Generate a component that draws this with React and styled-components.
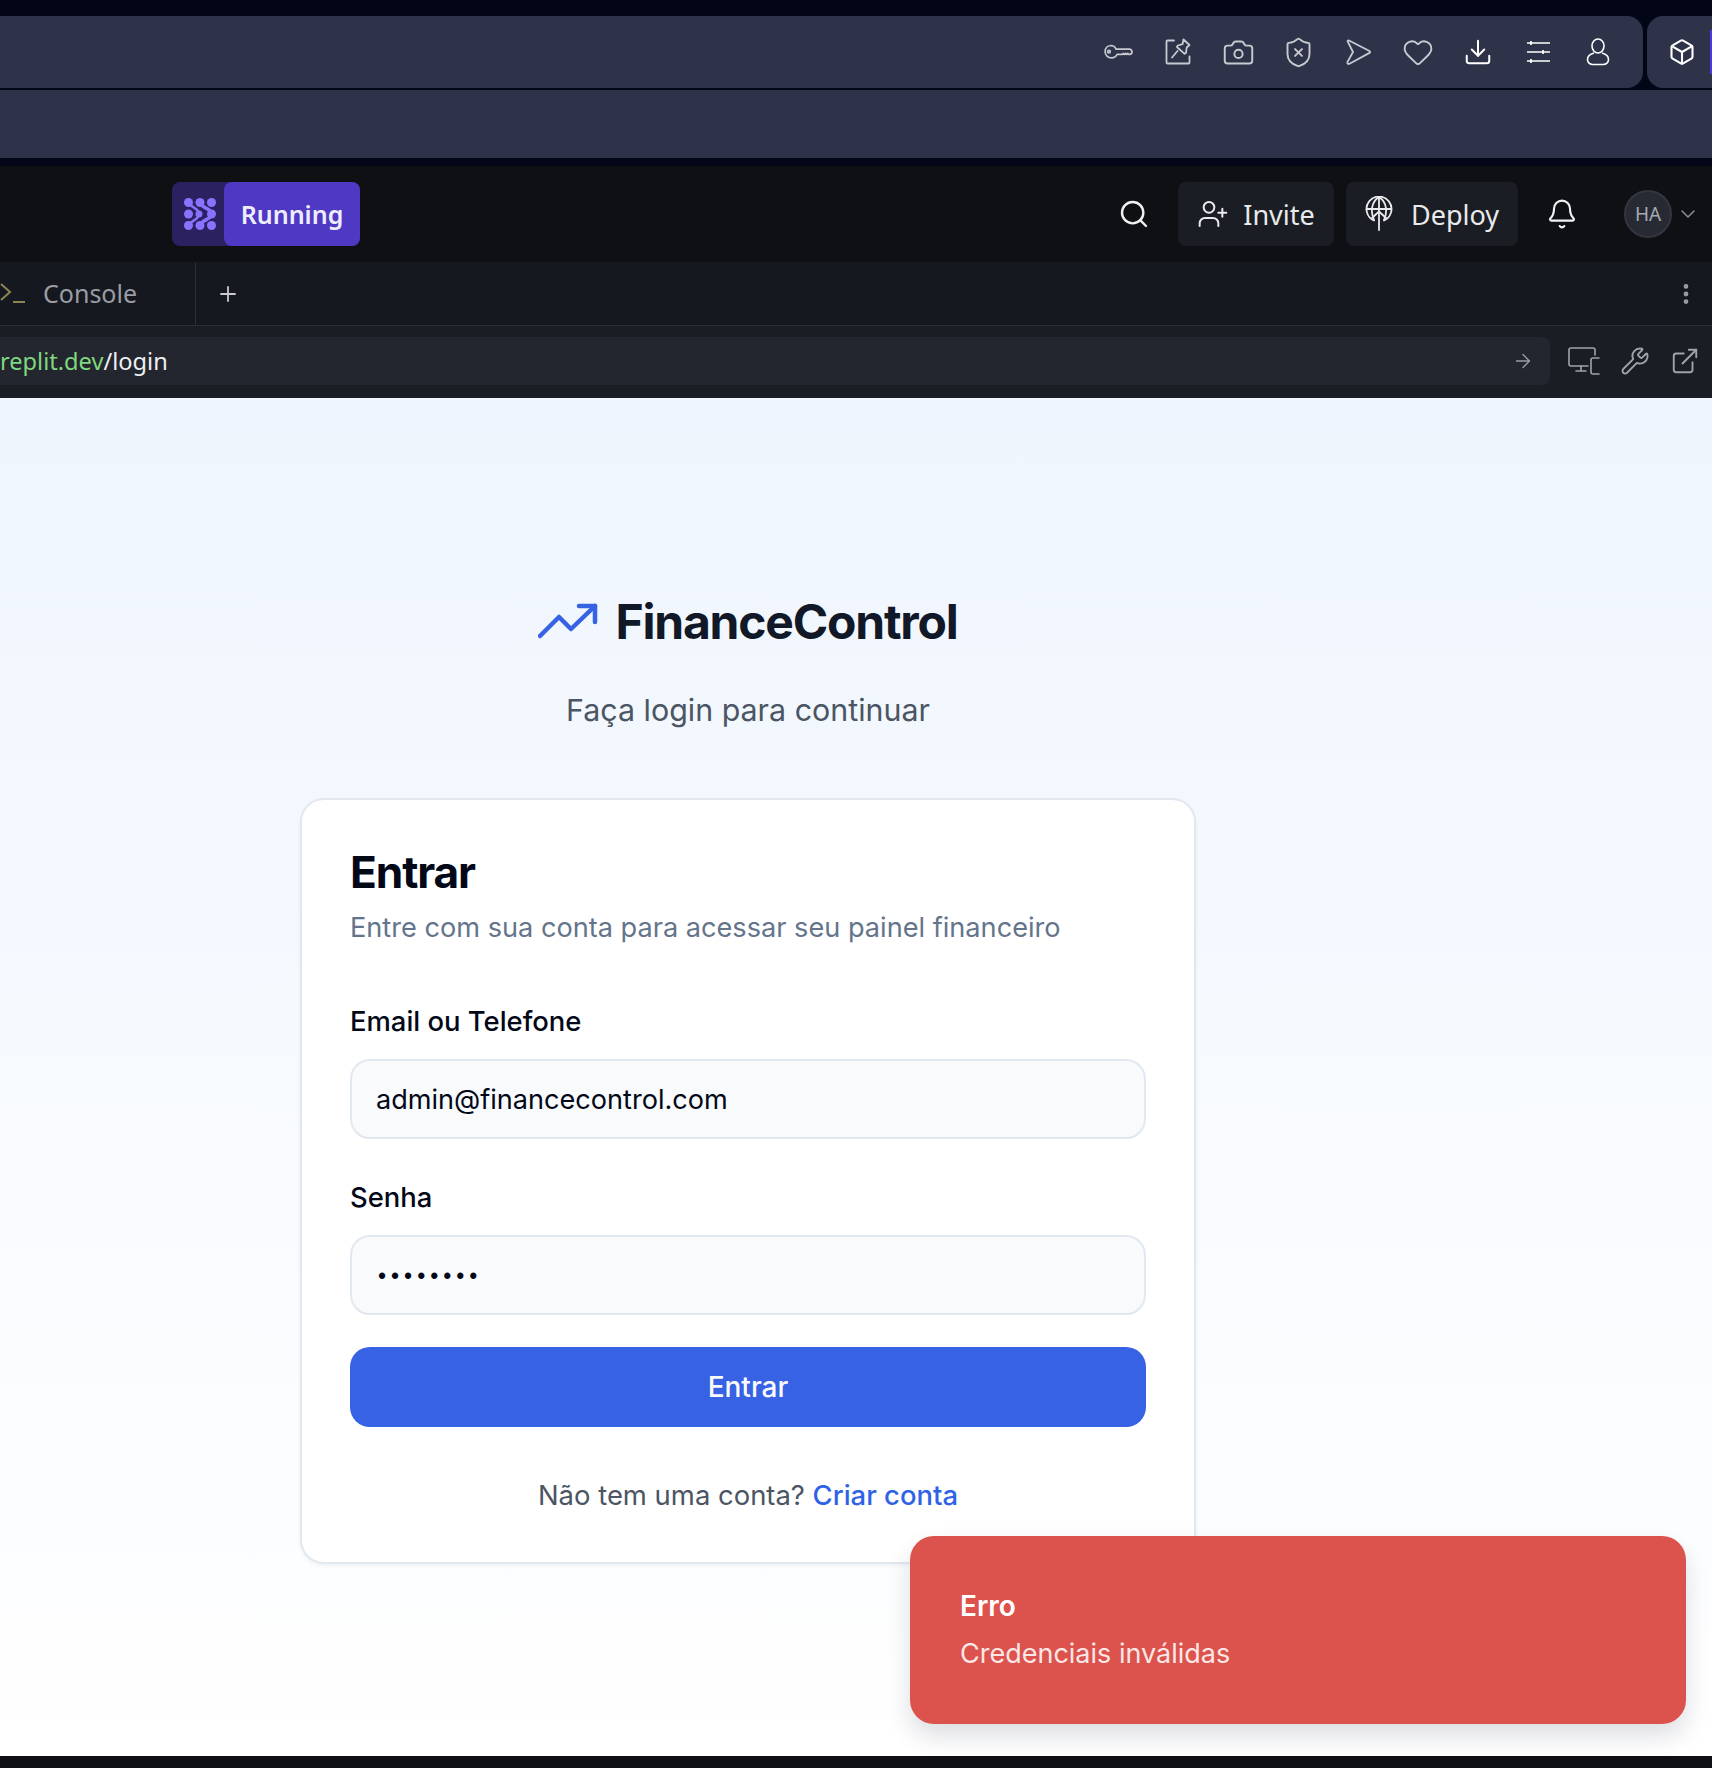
import React from "react";
import styled, { createGlobalStyle } from "styled-components";
import {
	ArrowRight,
	Bell,
	Box,
	Camera,
	ChevronDown,
	Download,
	EllipsisVertical,
	ExternalLink,
	Heart,
	Plus,
	Search,
	ShieldX,
	UserPlus,
	Wrench,
} from "lucide-react";

const GlobalStyle = createGlobalStyle`
	html, body {
		margin: 0;
		padding: 0;
		background: #020617;
	}
	body {
		height: 1768px;
		overflow: hidden;
		font-family: "Inter", "Liberation Sans", sans-serif;
	}
	* {
		box-sizing: border-box;
	}
`;

const Screen = styled.div`
	width: 1712px;
	height: 1768px;
	display: flex;
	flex-direction: column;
	background: #020617;
	padding-top: 16px;
	overflow: hidden;
`;

/* browser chrome at the top */
const ToolRow = styled.div`
	height: 72px;
	display: flex;
	gap: 4px;
`;

const ToolPanel = styled.div`
	flex: 1;
	display: flex;
	align-items: center;
	justify-content: flex-end;
	gap: 32px;
	padding-right: 31px;
	background: #2e3349;
	border-radius: 0 16px 16px 0;
`;

const SidePanel = styled.div`
	width: 65px;
	display: flex;
	align-items: center;
	padding-left: 21px;
	background: #2e3349;
	border-radius: 16px 0 0 16px;
	position: relative;
	color: #fff;

	&::after {
		content: "";
		position: absolute;
		right: 0;
		top: 14px;
		width: 2px;
		height: 44px;
		background: #4f35e8;
	}
`;

const ToolIcon = styled.span`
	width: 28px;
	height: 28px;
	display: flex;
	align-items: center;
	justify-content: center;
	flex: none;
	color: ${(p) => (p.$bright ? "#ffffff" : "#c8cad0")};

	& svg {
		flex: none;
	}
`;

const BlankBar = styled.div`
	height: 68px;
	margin-top: 2px;
	background: #2e3349;
`;

/* replit header */
const Header = styled.div`
	height: 96px;
	margin-top: 8px;
	display: flex;
	align-items: center;
	padding: 0 12px 0 172px;
	background: #0e1014;
`;

const RunGroup = styled.div`
	display: flex;
	height: 64px;
	border-radius: 8px;
	background: #2b2060;
`;

const RunIcon = styled.div`
	width: 52px;
	padding-left: 4px;
	display: flex;
	align-items: center;
	justify-content: center;
`;

const RunButton = styled.div`
	width: 136px;
	display: flex;
	align-items: center;
	justify-content: center;
	border-radius: 8px;
	background: #4e38c4;
	color: #eeeefb;
	font-family: "Noto Sans", sans-serif;
	font-size: 25px;
	font-weight: 600;
`;

const HeaderRight = styled.div`
	margin-left: auto;
	display: flex;
	align-items: center;
`;

const SearchIcon = styled(Search)`
	color: #f0f1f3;
	margin-right: 28px;
`;

const HeaderButton = styled.div`
	height: 64px;
	width: ${(p) => p.$width}px;
	margin-right: 12px;
	display: flex;
	align-items: center;
	justify-content: center;
	gap: ${(p) => p.$gap}px;
	border-radius: 8px;
	background: #1a1d23;
	color: #e9eaec;
	font-family: "Noto Sans", sans-serif;
	font-size: 27px;
`;

const BellIcon = styled(Bell)`
	color: #f0f1f3;
	margin: 0 46px 0 16px;
`;

const Avatar = styled.div`
	width: 48px;
	height: 48px;
	display: flex;
	align-items: center;
	justify-content: center;
	border-radius: 50%;
	background: #272a33;
	border: 2px solid #33363f;
	color: #a6a9b2;
	font-family: "Noto Sans", sans-serif;
	font-size: 19px;
`;

const Caret = styled(ChevronDown)`
	color: #8b8e96;
	margin-left: 4px;
`;

/* tab strip */
const TabBar = styled.div`
	height: 64px;
	display: flex;
	align-items: stretch;
	background: #16181f;
	border-bottom: 1px solid #2b2e35;
	padding-right: 13px;
`;

const ConsoleTab = styled.div`
	width: 196px;
	display: flex;
	align-items: center;
	gap: 17px;
	padding-bottom: 2px;
	border-right: 1px solid #2b2e35;
	color: #9a9da5;
	font-family: "Noto Sans", sans-serif;
	font-size: 25px;
`;

const AddTab = styled.div`
	display: flex;
	align-items: center;
	padding-left: 20px;
	color: #c9cbd0;
`;

const TabMenu = styled.div`
	margin-left: auto;
	display: flex;
	align-items: center;
	color: #9a9da5;
`;

/* address bar */
const UrlRow = styled.div`
	height: 72px;
	display: flex;
	align-items: center;
	background: #1a1d23;
	padding: 0 12px 2px 0;
`;

const UrlField = styled.div`
	width: 1550px;
	height: 48px;
	display: flex;
	align-items: center;
	justify-content: space-between;
	padding-right: 16px;
	border-radius: 0 8px 8px 0;
	background: #23262e;
	color: #eeeff1;
	font-family: "Noto Sans", sans-serif;
	font-size: 23.6px;
`;

const UrlHost = styled.span`
	color: #7fd77f;
`;

const UrlTools = styled.div`
	flex: 1;
	display: flex;
	justify-content: flex-end;
	align-items: center;
	gap: 20px;
	color: #a0a3ab;
`;

/* login page */
const Page = styled.div`
	flex: 1;
	position: relative;
	padding: 193px 0 0 300px;
	background: linear-gradient(180deg, #eff5fe 0%, #ffffff 100%);
`;

const Column = styled.div`
	width: 896px;
	display: flex;
	flex-direction: column;
	align-items: center;
`;

const Brand = styled.div`
	height: 60px;
	display: flex;
	align-items: center;
	gap: 17px;
	margin-bottom: 37px;
`;

const BrandName = styled.h1`
	margin: 0;
	font-size: 48px;
	font-weight: 700;
	letter-spacing: -1.2px;
	color: #111827;
`;

const Tagline = styled.p`
	margin: 0 0 66px;
	font-size: 30.4px;
	line-height: 44px;
	color: #4b5563;
`;

const Card = styled.form`
	width: 100%;
	height: 766px;
	padding: 48px;
	background: #ffffff;
	border: 2px solid #e2e8f0;
	border-radius: 24px;
	box-shadow: 0 2px 4px rgba(15, 23, 42, 0.05);
`;

const CardTitle = styled.h2`
	margin: 0;
	font-size: 44.2px;
	line-height: 48px;
	font-weight: 700;
	letter-spacing: -1.1px;
	color: #020817;
`;

const CardSubtitle = styled.p`
	margin: 12px 0 0;
	font-size: 27.15px;
	line-height: 40px;
	color: #64748b;
`;

const FieldLabel = styled.label`
	display: block;
	margin: ${(p) => p.$top}px 0 20px;
	font-size: 27.4px;
	line-height: 36px;
	font-weight: 500;
	color: #020817;
`;

const TextInput = styled.input`
	display: block;
	width: 100%;
	height: 80px;
	padding: ${(p) => (p.$secret ? "3px 24px 0 26px" : "0 24px")};
	background: #f8fafc;
	border: 2px solid #e2e8f0;
	border-radius: 20px;
	font-family: ${(p) => (p.$secret ? '"Liberation Sans", sans-serif' : "inherit")};
	font-size: ${(p) => (p.$secret ? "23px" : "27.1px")};
	letter-spacing: ${(p) => (p.$secret ? "5px" : "normal")};
	color: #020817;
	outline: none;
`;

const Submit = styled.button`
	display: block;
	width: 100%;
	height: 80px;
	margin-top: 32px;
	border: none;
	border-radius: 20px;
	background: #3662e3;
	color: #f8fafc;
	font-family: inherit;
	font-size: 28px;
	font-weight: 500;
`;

const SignupLine = styled.p`
	margin: 48px 0 0;
	text-align: center;
	font-size: 27.45px;
	line-height: 40px;
	color: #4b5563;
`;

const SignupLink = styled.a`
	color: #2f62e6;
	font-weight: 500;
`;

const Toast = styled.div`
	position: absolute;
	right: 26px;
	bottom: 32px;
	width: 776px;
	height: 188px;
	padding: 50px 50px 0;
	border-radius: 24px;
	background: #dc524c;
	color: #fff;
	box-shadow: 0 12px 24px rgba(15, 23, 42, 0.14);
`;

const ToastTitle = styled.div`
	font-size: 28px;
	line-height: 40px;
	font-weight: 600;
`;

const ToastText = styled.div`
	margin-top: 8px;
	font-size: 27px;
	line-height: 40px;
	color: #fbe7e6;
`;

const BottomBar = styled.div`
	height: 12px;
	background: #0e1014;
`;

/* icons that the packages have no close match for */
const KeyIcon = () => (
	<svg width='30' height='16' viewBox='0 0 30 16' fill='none' stroke='currentColor' strokeWidth='1.7' strokeLinejoin='round'>
		<path d='M7.500 1.500c2.700 0 4.700 1.600 5.500 3.600h13.500c1.200 0 2.500 1.300 2.500 2.600s-1 2.600-2.300 2.600h-.9l-1-1-1.100 1-1.100-1-1.100 1-1.100-1-1.100 1h-5.200c-.8 2.100-3 3.600-5.500 3.600-3.700 0-6.500-2.700-6.500-6.300s2.800-6.100 6.400-6.100z' />
		<circle cx='6' cy='7.700' r='1.300' />
	</svg>
);

const PinIcon = () => (
	<svg width='30' height='30' viewBox='0 0 30 30' fill='none' stroke='currentColor' strokeWidth='1.8' strokeLinecap='round' strokeLinejoin='round'>
		<path d='M11 3.500H4.500a1 1 0 0 0-1 1v21a1 1 0 0 0 1 1h21a1 1 0 0 0 1-1v-6' />
		<path d='M20.500 2.500l6 5.500-2.800 2.500-.7 5.500-1.400.8-7.700-6.800.9-1.500 4.800-1.300z' />
		<path d='M14.500 14L9 20.500' />
	</svg>
);

const SendIcon = () => (
	<svg width='28' height='28' viewBox='0 0 28 28' fill='none' stroke='currentColor' strokeWidth='1.8' strokeLinejoin='round'>
		<path d='M3.500 3.200c.4-.7 1.200-.9 2-.5L25.500 13c.8.400.8 1.400 0 1.900L5.500 25.800c-1.300.6-2.600-.5-2.100-1.700L9 14 3.500 3.200z' />
	</svg>
);

const SlidersIcon = () => (
	<svg width='26' height='26' viewBox='0 0 26 26' fill='none' stroke='currentColor' strokeWidth='1.7'>
		<path d='M2 4h23M2 13h23M2 22h23' />
		<path d='M6 2v4M18 11v4M6 20v4' />
	</svg>
);

const PersonIcon = () => (
	<svg width='24' height='28' viewBox='0 0 24 28' fill='none' stroke='currentColor' strokeWidth='1.6'>
		<ellipse cx='12' cy='8' rx='6' ry='7' />
		<path d='M8 15c-3.800 1-6.500 3.500-6.500 6.500 0 3 2.500 5 5 5h11c2.500 0 5-2 5-5 0-3-2.700-5.500-6.500-6.500' />
	</svg>
);

const PromptIcon = () => (
	<svg width='26' height='24' viewBox='0 0 26 24' fill='none' stroke='#8b8455' strokeWidth='2'>
		<path d='M1 3l9 8-9 8' />
		<path d='M13 21h12' />
	</svg>
);

const DeployIcon = () => (
	<svg width='28' height='36' viewBox='0 0 28 36' fill='none' stroke='currentColor' strokeWidth='1.8' strokeLinecap='round' strokeLinejoin='round'>
		<path d='M9 24.500A12.500 12.500 0 1 1 19 24.500' />
		<path d='M2 13h24M14 1v33M14 1c-9 6-8 16-5 23M14 1c9 6 8 16 5 23' />
		<path d='M7 22l7-6.500 7 6.500' />
	</svg>
);

const ScreensIcon = () => (
	<svg width='32' height='28' viewBox='0 0 32 28' fill='none' stroke='currentColor' strokeWidth='1.6' strokeLinecap='round' strokeLinejoin='round'>
		<path d='M27 8V3a2 2 0 0 0-2-2H3a2 2 0 0 0-2 2v14a2 2 0 0 0 2 2h17' />
		<path d='M13 19v5M8 24h10' />
		<path d='M31 11h-6a2 2 0 0 0-2 2v12a2 2 0 0 0 2 2h6' />
	</svg>
);

const AgentMark = () => (
	<svg width='32' height='32' viewBox='0 0 32 32' fill='#8a72ff' stroke='none'>
		<circle cx='4.500' cy='4.500' r='4.500' />
		<circle cx='16' cy='4.500' r='4.500' />
		<circle cx='27.500' cy='4.500' r='4.500' />
		<circle cx='4.500' cy='16' r='4.500' />
		<circle cx='15' cy='16' r='3.500' />
		<circle cx='27.500' cy='16' r='4.500' />
		<circle cx='4.500' cy='27.500' r='4.500' />
		<circle cx='16' cy='27.500' r='4.500' />
		<circle cx='27.500' cy='27.500' r='4.500' />
		<path d='M16 4.500C18 11 27.500 10 27.500 16S18 21 16 27.500' fill='none' stroke='#8a72ff' strokeWidth='3.500' />
		<path d='M4.500 4.500C7 10 15 10 15 16S7 22 4.500 27.500' fill='none' stroke='#8a72ff' strokeWidth='2.500' />
	</svg>
);

const TrendMark = () => (
	<svg width='60' height='36' viewBox='0 0 60 36' fill='none' stroke='#3662e3' strokeWidth='4.500' strokeLinecap='round' strokeLinejoin='round'>
		<path d='M2 33L21 14l12 12L57 3' />
		<path d='M41 3h16v16' />
	</svg>
);

const ToolIcons = () => (
	<>
		<ToolIcon><KeyIcon /></ToolIcon>
		<ToolIcon><PinIcon /></ToolIcon>
		<ToolIcon><Camera size={33} strokeWidth={1.4} /></ToolIcon>
		<ToolIcon><ShieldX size={33} strokeWidth={1.4} /></ToolIcon>
		<ToolIcon><SendIcon /></ToolIcon>
		<ToolIcon><Heart size={32} strokeWidth={1.4} /></ToolIcon>
		<ToolIcon $bright><Download size={30} strokeWidth={1.6} /></ToolIcon>
		<ToolIcon $bright><SlidersIcon /></ToolIcon>
		<ToolIcon $bright><PersonIcon /></ToolIcon>
	</>
);

export default function App() {
	return (
		<Screen>
			<GlobalStyle />
			<ToolRow>
				<ToolPanel>
					<ToolIcons />
				</ToolPanel>
				<SidePanel>
					<Box size={28} strokeWidth={1.8} />
				</SidePanel>
			</ToolRow>
			<BlankBar />
			<Header>
				<RunGroup>
					<RunIcon><AgentMark /></RunIcon>
					<RunButton>Running</RunButton>
				</RunGroup>
				<HeaderRight>
					<SearchIcon size={32} strokeWidth={1.8} />
					<HeaderButton $width={156} $gap={14}>
						<UserPlus size={32} strokeWidth={1.5} />
						Invite
					</HeaderButton>
					<HeaderButton $width={172} $gap={18}>
						<DeployIcon />
						Deploy
					</HeaderButton>
					<BellIcon size={32} strokeWidth={1.6} />
					<Avatar>HA</Avatar>
					<Caret size={24} strokeWidth={1.5} />
				</HeaderRight>
			</Header>
			<TabBar>
				<ConsoleTab>
					<PromptIcon />
					Console
				</ConsoleTab>
				<AddTab><Plus size={24} strokeWidth={1.8} /></AddTab>
				<TabMenu><EllipsisVertical size={26} strokeWidth={2.4} /></TabMenu>
			</TabBar>
			<UrlRow>
				<UrlField>
					<span><UrlHost>replit.dev</UrlHost>/login</span>
					<ArrowRight size={22} strokeWidth={1.5} color='#9a9da5' />
				</UrlField>
				<UrlTools>
					<ScreensIcon />
					<Wrench size={30} strokeWidth={1.5} />
					<ExternalLink size={30} strokeWidth={1.5} />
				</UrlTools>
			</UrlRow>
			<Page>
				<Column>
					<Brand>
						<TrendMark />
						<BrandName>FinanceControl</BrandName>
					</Brand>
					<Tagline>Faça login para continuar</Tagline>
					<Card onSubmit={(e) => e.preventDefault()}>
						<CardTitle>Entrar</CardTitle>
						<CardSubtitle>Entre com sua conta para acessar seu painel financeiro</CardSubtitle>
						<FieldLabel $top={55}>Email ou Telefone</FieldLabel>
						<TextInput type='text' defaultValue='admin@financecontrol.com' />
						<FieldLabel $top={40}>Senha</FieldLabel>
						<TextInput $secret type='password' defaultValue='admin123' />
						<Submit type='submit'>Entrar</Submit>
						<SignupLine>
							Não tem uma conta? <SignupLink>Criar conta</SignupLink>
						</SignupLine>
					</Card>
				</Column>
				<Toast>
					<ToastTitle>Erro</ToastTitle>
					<ToastText>Credenciais inválidas</ToastText>
				</Toast>
			</Page>
			<BottomBar />
		</Screen>
	);
}
